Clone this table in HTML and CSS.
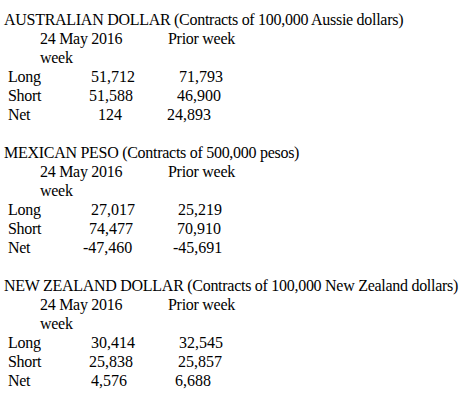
FILE: index.html
```html
<!DOCTYPE html>
<html>
<head>
  <title>Currency positions</title>
  <link rel="stylesheet" href="styles.css">
</head>
<body>
  <div class="report">

    <!-- Australian dollar -->
    <div class="section">
      <div class="title">AUSTRALIAN DOLLAR (Contracts of 100,000 Aussie dollars)</div>
      <div class="head">
        <div class="head-date">24 May 2016 week</div>
        <div class="head-prior">Prior week</div>
      </div>
      <div class="row">
        <div class="label">Long</div>
        <div class="num in-8">51,712</div>
        <div class="num in-12">71,793</div>
      </div>
      <div class="row">
        <div class="label">Short</div>
        <div class="num in-6">51,588</div>
        <div class="num in-10">46,900</div>
      </div>
      <div class="row">
        <div class="label">Net</div>
        <div class="num in-15">124</div>
        <div class="num">24,893</div>
      </div>
    </div>

    <!-- Mexican peso -->
    <div class="section">
      <div class="title">MEXICAN PESO (Contracts of 500,000 pesos)</div>
      <div class="head">
        <div class="head-date">24 May 2016 week</div>
        <div class="head-prior">Prior week</div>
      </div>
      <div class="row">
        <div class="label">Long</div>
        <div class="num in-8">27,017</div>
        <div class="num in-11">25,219</div>
      </div>
      <div class="row">
        <div class="label">Short</div>
        <div class="num in-6">74,477</div>
        <div class="num in-10">70,910</div>
      </div>
      <div class="row">
        <div class="label">Net</div>
        <div class="num">-47,460</div>
        <div class="num in-6">-45,691</div>
      </div>
    </div>

    <!-- New Zealand dollar -->
    <div class="section">
      <div class="title">NEW ZEALAND DOLLAR (Contracts of 100,000 New Zealand dollars)</div>
      <div class="head">
        <div class="head-date">24 May 2016 week</div>
        <div class="head-prior">Prior week</div>
      </div>
      <div class="row">
        <div class="label">Long</div>
        <div class="num in-8">30,414</div>
        <div class="num in-12">32,545</div>
      </div>
      <div class="row">
        <div class="label">Short</div>
        <div class="num in-6">25,838</div>
        <div class="num in-11">25,857</div>
      </div>
      <div class="row">
        <div class="label">Net</div>
        <div class="num in-8">4,576</div>
        <div class="num in-8">6,688</div>
      </div>
    </div>

  </div>
</body>
</html>
```

FILE: styles.css
```css
body {
  margin: 0;
  padding: 0;
  background: #fff;
  color: #000;
  font-family: "Liberation Serif", "Times New Roman", serif;
  font-size: 16px;
  line-height: 19px;
  letter-spacing: -0.28px;
}

.report {
  padding: 10px 4px 0 4px;
}

/* one block per currency */
.section {
  padding-bottom: 19px;
}

.title {
  white-space: nowrap;
}

.head {
  display: flex;
  padding-left: 36px;
}

.head-date {
  width: 100px;
}

.head-prior {
  margin-left: 28px;
}

/* data rows: label, this week, prior week */
.row {
  display: grid;
  grid-template-columns: 79px 84px auto;
}

.label {
  padding-left: 4px;
}

.num {
  white-space: nowrap;
  letter-spacing: 0;
}

.in-6 { padding-left: 6px; }
.in-8 { padding-left: 8px; }
.in-10 { padding-left: 10px; }
.in-11 { padding-left: 11px; }
.in-12 { padding-left: 12px; }
.in-15 { padding-left: 15px; }
```
